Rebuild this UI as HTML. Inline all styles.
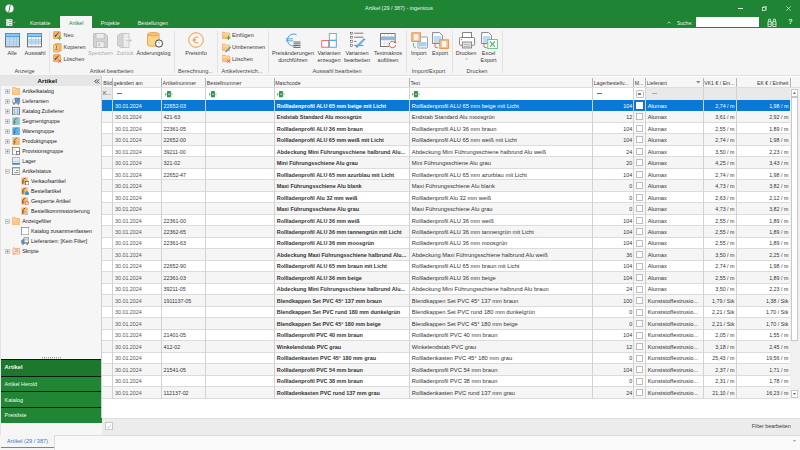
<!DOCTYPE html>
<html><head><meta charset="utf-8">
<style>
*{box-sizing:border-box;margin:0;padding:0}
html,body{width:800px;height:450px;overflow:hidden;background:#f5f5f5;font-family:"Liberation Sans",sans-serif;color:#333}
.a{position:absolute;white-space:nowrap}
#title{position:absolute;left:0;top:0;width:800px;height:27.5px;background:#1f8534}
.wt{color:#e8f3ea;font-size:5.6px}
#ribbon{position:absolute;left:0;top:27.5px;width:800px;height:48.5px;background:#f5f5f5;border-bottom:1px solid #e2e2e2}
.rl{font-size:5.5px;color:#3a3a3a;line-height:6.5px}
.gl{font-size:5.6px;color:#4a4a4a}
.sep{position:absolute;top:3px;width:1px;height:42px;background:#dedede}
#nav{position:absolute;left:0;top:76px;width:101.5px;height:359px;background:#f6f6f6;border-left:1px solid #e4e4e4}
#navh{position:absolute;left:0;top:0;width:100.5px;height:10px;background:#e6e6e6}
.ti{position:absolute;font-size:5.3px;color:#222;white-space:nowrap;line-height:8px}
#grid{position:absolute;left:101.5px;top:76px;width:698.5px;height:359.5px;background:#fff}
.ht{font-size:5.2px;color:#3a3a3a;line-height:10px}
.c{font-size:5.4px;line-height:11.45px;color:#333}
.c.d{color:#555;font-size:5.3px}
.c.n{font-size:5.3px}
.c.mc{font-weight:bold;font-size:5.45px}
.c.tx{font-size:5.77px}
.c.s{color:#fff}
.fk{color:#6a4848;font-size:5.6px}
.cb{width:7px;height:7px;background:#fff;border:0.7px solid #bdbdbd}
.cb.s{border-color:#fff}
.tabt{font-size:5.2px;color:#e6f2e8;line-height:8px}
.tabt.sel{color:#2a8040}
.dis{color:#aaa !important}
.navht{font-size:6.2px;font-weight:bold;color:#111;line-height:9px}
.gbt{font-size:5.4px;color:#f0f7f1;line-height:7px}
.gbt.gsel{font-weight:bold;font-size:5.8px}
.bt{font-size:5.6px;color:#3b78c8;line-height:7px}

</style></head><body>
<div id="title"><svg class="a" style="left:4.6px;top:3.8px" width="9" height="9" viewBox="0 0 9 9"><circle cx="4.5" cy="4.5" r="4.1" fill="#fff"/><path d="M5.3 0.6 L3.7 8.4" stroke="#1f8534" stroke-width="0.9"/></svg><div class="a wt" style="left:365px;top:4.6px;font-size:5.45px">Artikel (29 / 387) - ingenious</div><div class="a" style="left:738px;top:8px;width:5px;height:0.7px;background:#e8f3ea"></div><svg class="a" style="left:761.5px;top:5.5px" width="5" height="5" viewBox="0 0 5 5"><rect x="0.35" y="1.35" width="3.2" height="3.3" fill="none" stroke="#e8f3ea" stroke-width="0.7"/><path d="M1.4 1.2V0.35H4.65V3.6H3.7" fill="none" stroke="#e8f3ea" stroke-width="0.6"/></svg><svg class="a" style="left:786px;top:5.6px" width="5" height="5" viewBox="0 0 5 5"><path d="M0.3 0.3L4.7 4.7M4.7 0.3L0.3 4.7" stroke="#e8f3ea" stroke-width="0.7"/></svg><svg class="a" style="left:5.8px;top:18.8px" width="10" height="8" viewBox="0 0 10 8"><rect x="0.2" y="0.2" width="6.2" height="6.7" fill="#f2f2f2"/><rect x="0.2" y="0.2" width="1.3" height="6.7" fill="#cfcfcf"/><path d="M3 1.5H5.5M2.5 3.55H5.5M3 5.6H5.5" stroke="#777" stroke-width="0.7"/><path d="M8.2 3.3L9.2 3.3" stroke="#ddd" stroke-width="0.8"/></svg><div class="a" style="left:60.2px;top:16px;width:32px;height:11.5px;background:#f5f5f5"></div><div class="a tabt" style="left:30px;top:18.3px;top:18.9px">Kontakte</div><div class="a tabt sel" style="left:61.2px;top:18.9px;width:30px;text-align:center">Artikel</div><div class="a tabt" style="left:100.7px;top:18.3px;top:18.9px">Projekte</div><div class="a tabt" style="left:137.8px;top:18.3px;top:18.9px">Bestellungen</div><svg class="a" style="left:666.5px;top:20.5px" width="4" height="3" viewBox="0 0 4 3"><path d="M0.4 2.5L2 0.8L3.6 2.5" fill="none" stroke="#e8f3ea" stroke-width="0.7"/></svg><div class="a tabt" style="left:677px;top:18.5px;font-size:5px">Suche:</div><div class="a" style="left:696.4px;top:17px;width:62.6px;height:9.6px;background:#fff"></div><svg class="a" style="left:766.5px;top:17.8px" width="10" height="9" viewBox="0 0 10 9"><g fill="none" stroke="#e8f3ea" stroke-width="0.8"><rect x="1" y="3.8" width="3.2" height="4.6"/><rect x="5.8" y="3.8" width="3.2" height="4.6"/><path d="M1.6 3.8V1.2H3.6V3.8M6.4 3.8V1.2H8.4V3.8M4.2 5H5.8"/></g><path d="M1 6.3H4.2M5.8 6.3H9" stroke="#e8f3ea" stroke-width="0.6"/></svg><div class="a tabt" style="left:788.3px;top:17.6px;font-size:7px;font-weight:bold;color:#e8f3ea">?</div></div>
<div id="ribbon"></div><div class="a" style="left:48.5px;top:30.8px;width:0.8px;height:42px;background:#e2e2e2"></div><div class="a" style="left:173.9px;top:30.8px;width:0.8px;height:42px;background:#e2e2e2"></div><div class="a" style="left:216.8px;top:30.8px;width:0.8px;height:42px;background:#e2e2e2"></div><div class="a" style="left:267.5px;top:30.8px;width:0.8px;height:42px;background:#e2e2e2"></div><div class="a" style="left:405.5px;top:30.8px;width:0.8px;height:42px;background:#e2e2e2"></div><div class="a" style="left:452.0px;top:30.8px;width:0.8px;height:42px;background:#e2e2e2"></div><div class="a" style="left:501.5px;top:30.8px;width:0.8px;height:42px;background:#e2e2e2"></div><svg class="a" style="left:5px;top:32.8px" width="15" height="15" viewBox="0 0 15 15"><rect x="0.5" y="0.5" width="14" height="13.3" fill="#fff" stroke="#6d6d6d" stroke-width="0.8"/><rect x="0.5" y="0.5" width="14" height="3.2" fill="#8fc6ef" stroke="#3d94dc" stroke-width="0.8"/><rect x="0.9" y="3.7" width="13.2" height="2.5" fill="#bfe0f7"/><rect x="0.9" y="6.2" width="13.2" height="2.5" fill="#bfe0f7"/><rect x="0.9" y="8.7" width="13.2" height="2.5" fill="#bfe0f7"/><rect x="0.9" y="11.2" width="13.2" height="2.5" fill="#bfe0f7"/><path d="M4.8 3.7V13.4" stroke="#9ab" stroke-width="0.4"/><path d="M8.5 3.7V13.4" stroke="#9ab" stroke-width="0.4"/><path d="M11.4 3.7V13.4" stroke="#9ab" stroke-width="0.4"/><path d="M0.9 6.2H14.1" stroke="#9ab" stroke-width="0.4"/><path d="M0.9 8.7H14.1" stroke="#9ab" stroke-width="0.4"/><path d="M0.9 11.2H14.1" stroke="#9ab" stroke-width="0.4"/><rect x="0.5" y="0.5" width="14" height="13.3" fill="none" stroke="#6d6d6d" stroke-width="0.8"/><rect x="0.5" y="0.5" width="14" height="3.2" fill="#8fc6ef" stroke="#3d94dc" stroke-width="0.8"/></svg><svg class="a" style="left:27.2px;top:32.8px" width="15" height="15" viewBox="0 0 15 15"><rect x="0.5" y="0.5" width="14" height="13.3" fill="#fff" stroke="#6d6d6d" stroke-width="0.8"/><rect x="0.5" y="0.5" width="14" height="3.2" fill="#8fc6ef" stroke="#3d94dc" stroke-width="0.8"/><rect x="0.9" y="3.7" width="13.2" height="2.5" fill="#ffffff"/><rect x="0.9" y="6.2" width="13.2" height="2.5" fill="#bfe0f7"/><rect x="0.9" y="8.7" width="13.2" height="2.5" fill="#bfe0f7"/><rect x="0.9" y="11.2" width="13.2" height="2.5" fill="#ffffff"/><path d="M4.8 3.7V13.4" stroke="#9ab" stroke-width="0.4"/><path d="M8.5 3.7V13.4" stroke="#9ab" stroke-width="0.4"/><path d="M11.4 3.7V13.4" stroke="#9ab" stroke-width="0.4"/><path d="M0.9 6.2H14.1" stroke="#9ab" stroke-width="0.4"/><path d="M0.9 8.7H14.1" stroke="#9ab" stroke-width="0.4"/><path d="M0.9 11.2H14.1" stroke="#9ab" stroke-width="0.4"/><rect x="0.5" y="0.5" width="14" height="13.3" fill="none" stroke="#6d6d6d" stroke-width="0.8"/><rect x="0.5" y="0.5" width="14" height="3.2" fill="#8fc6ef" stroke="#3d94dc" stroke-width="0.8"/></svg><div class="a rl" style="left:-2.8000000000000007px;top:50.4px;width:30px;text-align:center">Alle</div><div class="a rl" style="left:15.0px;top:50.4px;width:40px;text-align:center">Auswahl</div><div class="a gl" style="left:-0.5px;top:68.3px;width:50px;text-align:center">Anzeige</div><svg class="a" style="left:53.2px;top:30.8px" width="9" height="10" viewBox="0 0 9 10"><rect x="0.4" y="0.6" width="7" height="7" rx="0.8" fill="#f6b46a" stroke="#e88a2e" stroke-width="0.6"/><path d="M2 6L5.5 1.5" stroke="#444" stroke-width="1"/><path d="M1.6 4.2H3.3" stroke="#444" stroke-width="0.7"/><path d="M6.6 5V9.2M4.5 7.1H8.7" stroke="#3cb35a" stroke-width="1"/></svg><svg class="a" style="left:53.2px;top:42.6px" width="9" height="10" viewBox="0 0 9 10"><rect x="2.2" y="0.4" width="6" height="7.6" rx="0.6" fill="#f6c27a" stroke="#e88a2e" stroke-width="0.6"/><rect x="0.4" y="1.6" width="6" height="7.4" rx="0.6" fill="#f8c884" stroke="#e88a2e" stroke-width="0.6"/><path d="M2.2 6.5H4.5M3.5 2.5V5.5" stroke="#555" stroke-width="0.7"/></svg><svg class="a" style="left:53.2px;top:54.4px" width="9" height="10" viewBox="0 0 9 10"><rect x="0.4" y="0.6" width="7" height="7" rx="0.8" fill="#f6b46a" stroke="#e88a2e" stroke-width="0.6"/><path d="M2 6L5.5 1.5" stroke="#444" stroke-width="1"/><path d="M1.6 4.2H3.3" stroke="#444" stroke-width="0.7"/><path d="M5.2 5.6L8.4 8.8M8.4 5.6L5.2 8.8" stroke="#e24a4a" stroke-width="0.8"/></svg><div class="a rl" style="left:63.5px;top:32.2px;">Neu</div><div class="a rl" style="left:63.5px;top:44.0px;">Kopieren</div><div class="a rl" style="left:63.5px;top:55.8px;">Löschen</div><svg class="a" style="left:93px;top:32.5px" width="15" height="15" viewBox="0 0 15 15"><path d="M0.6 0.6H12L14.4 3V14.4H0.6Z" fill="#d4d4d4" stroke="#bcbcbc" stroke-width="1"/><rect x="3" y="0.6" width="8.2" height="5.2" fill="#ededed" stroke="#bcbcbc" stroke-width="0.8"/><rect x="3.6" y="8.6" width="7.6" height="5.8" fill="#ededed" stroke="#bcbcbc" stroke-width="0.8"/><rect x="5.2" y="10" width="2" height="3" fill="#c8c8c8"/></svg><svg class="a" style="left:117px;top:32.5px" width="16" height="15" viewBox="0 0 16 15"><path d="M0.6 2.5L4 0.6H9.5V14.4H4L0.6 12.5Z" fill="#d4d4d4" stroke="#bdbdbd" stroke-width="0.8"/><rect x="6" y="0.6" width="6" height="13.8" fill="#ececec" stroke="#c4c4c4" stroke-width="0.8"/><path d="M9 7.5H14.5M13 6L14.7 7.5L13 9" fill="none" stroke="#c4c4c4" stroke-width="0.7"/></svg><svg class="a" style="left:146.5px;top:31.8px" width="17" height="16" viewBox="0 0 17 16"><path d="M0.6 2.2V13.2C0.6 14.5 12 14.5 12 13.2V2.2" fill="#f8d68c" stroke="#ee9a3e" stroke-width="0.9"/><ellipse cx="6.3" cy="2.2" rx="5.7" ry="1.7" fill="#f6c46e" stroke="#ee9a3e" stroke-width="0.9"/><circle cx="12" cy="11.5" r="3.6" fill="#fff" stroke="#333" stroke-width="0.9"/><path d="M11.2 9.8L12.4 11.6" stroke="#3a8fd8" stroke-width="0.8"/></svg><div class="a rl dis" style="left:80.5px;top:50.4px;width:40px;text-align:center">Speichern</div><div class="a rl dis" style="left:105.0px;top:50.4px;width:40px;text-align:center">Zurück</div><div class="a rl" style="left:128.5px;top:50.4px;width:50px;text-align:center">Änderungslog</div><div class="a gl" style="left:76.5px;top:68.3px;width:70px;text-align:center">Artikel bearbeiten</div><svg class="a" style="left:188px;top:31.5px" width="16" height="16" viewBox="0 0 16 16"><circle cx="8" cy="8" r="7.3" fill="#fff" stroke="#f09a50" stroke-width="1"/><circle cx="8" cy="8" r="5.9" fill="none" stroke="#f6bf8e" stroke-width="0.6" stroke-dasharray="1.2 0.6"/><path d="M10.6 5.6A3.1 3.1 0 1 0 10.6 10.4" fill="none" stroke="#ee8a3a" stroke-width="1"/><path d="M4.6 7.3H8.6M4.6 8.8H8.6" stroke="#ee8a3a" stroke-width="0.7"/></svg><div class="a rl" style="left:176.0px;top:50.4px;width:40px;text-align:center">Preisinfo</div><div class="a gl" style="left:173.0px;top:68.3px;width:45px;text-align:center">Berechnung...</div><svg class="a" style="left:222px;top:30.8px" width="9" height="10" viewBox="0 0 9 10"><path d="M0.4 1.2H3L3.8 2.1H7.6V7.6H0.4Z" fill="#f9c87e" stroke="#ee9a3e" stroke-width="0.6"/><path d="M0.4 3H7.6" stroke="#fff" stroke-width="0.5"/><path d="M6.5 4.8V9M4.4 6.9H8.6" stroke="#3cb35a" stroke-width="1"/></svg><svg class="a" style="left:222px;top:42.6px" width="9" height="10" viewBox="0 0 9 10"><path d="M0.4 1.2H3L3.8 2.1H7.6V7.6H0.4Z" fill="#f9c87e" stroke="#ee9a3e" stroke-width="0.6"/><path d="M0.4 3H7.6" stroke="#fff" stroke-width="0.5"/><path d="M3.6 9.2L8.6 3.8" stroke="#3a8fd8" stroke-width="1.2"/></svg><svg class="a" style="left:222px;top:54.4px" width="9" height="10" viewBox="0 0 9 10"><path d="M0.4 1.2H3L3.8 2.1H7.6V7.6H0.4Z" fill="#f9c87e" stroke="#ee9a3e" stroke-width="0.6"/><path d="M0.4 3H7.6" stroke="#fff" stroke-width="0.5"/><path d="M5.2 5.8L8.2 8.8M8.2 5.8L5.2 8.8" stroke="#e24a4a" stroke-width="0.8"/></svg><div class="a rl" style="left:232px;top:32.2px;">Einfügen</div><div class="a rl" style="left:232px;top:44.0px;">Umbenennen</div><div class="a rl" style="left:232px;top:55.8px;">Löschen</div><div class="a gl" style="left:212.0px;top:68.3px;width:60px;text-align:center">Artikelverzeich...</div><svg class="a" style="left:284.5px;top:32.5px" width="17" height="16" viewBox="0 0 17 16"><path d="M11.5 1.8A6 6 0 1 0 11.5 12.2" fill="none" stroke="#3a94dc" stroke-width="0.9"/><path d="M0.8 5.8H8M0.8 7.8H8" stroke="#3a94dc" stroke-width="0.8"/><path d="M8.5 9H15.5M8.5 10.8H15.5M8.5 12.6H15.5M8.5 14.4H15.5" stroke="#444" stroke-width="0.8"/></svg><div class="a rl" style="left:263.0px;top:50.4px;width:60px;text-align:center">Preisänderungen</div><div class="a rl" style="left:263.0px;top:56.6px;width:60px;text-align:center">durchführen</div><svg class="a" style="left:320.5px;top:32.5px" width="16" height="15" viewBox="0 0 16 15"><rect x="8.3" y="0.5" width="7" height="6.6" fill="#fff" stroke="#5cc07a" stroke-width="0.9"/><rect x="0.8" y="7.6" width="7" height="6.6" fill="#fff" stroke="#e85a5a" stroke-width="0.9"/><rect x="8.3" y="7.6" width="7" height="6.6" fill="#fff" stroke="#4a9ae0" stroke-width="0.9"/></svg><div class="a rl" style="left:309.0px;top:50.4px;width:40px;text-align:center">Varianten</div><div class="a rl" style="left:309.0px;top:56.6px;width:40px;text-align:center">erzeugen</div><svg class="a" style="left:349.5px;top:32.3px" width="16" height="16" viewBox="0 0 16 16"><rect x="0.6" y="0.29999999999999993" width="1.8" height="1.8" fill="#fff" stroke="#555" stroke-width="0.55"/><path d="M4.2 1.2H13.3" stroke="#4a4a4a" stroke-width="0.7"/><rect x="0.6" y="4.3" width="1.8" height="1.8" fill="#fff" stroke="#555" stroke-width="0.55"/><path d="M4.2 5.2H13.3" stroke="#4a4a4a" stroke-width="0.7"/><rect x="0.6" y="8.5" width="1.8" height="1.8" fill="#fff" stroke="#555" stroke-width="0.55"/><path d="M4.2 9.4H6.5" stroke="#4a4a4a" stroke-width="0.7"/><rect x="0.6" y="12.5" width="1.8" height="1.8" fill="#fff" stroke="#555" stroke-width="0.55"/><path d="M4.2 13.4H13.3" stroke="#4a4a4a" stroke-width="0.7"/><path d="M6.3 15.2L14.6 6.9" stroke="#3a94dc" stroke-width="2"/><path d="M6.9 14.6L14 7.5" stroke="#d6ebfa" stroke-width="0.7"/></svg><div class="a rl" style="left:337.0px;top:50.4px;width:40px;text-align:center">Varianten</div><div class="a rl" style="left:337.0px;top:56.6px;width:40px;text-align:center">bearbeiten</div><svg class="a" style="left:379.5px;top:32.5px" width="18" height="16" viewBox="0 0 18 16"><rect x="0.6" y="0.6" width="14.5" height="13" fill="#fff" stroke="#555" stroke-width="0.8"/><rect x="0.9" y="3.6" width="14" height="3.4" fill="#7fbcec"/><path d="M0.6 3.4H15M0.6 7.2H15M0.6 10.4H15M4.3 0.6V13.6M8 0.6V13.6M11.6 0.6V3.6" stroke="#bbb" stroke-width="0.4"/><circle cx="12.4" cy="11.8" r="3.6" fill="#fff"/><path d="M14.8 9.4A3.2 3.2 0 1 0 15.6 12" fill="none" stroke="#e84040" stroke-width="0.9"/><path d="M13.4 9.6L15.6 10.3L15.7 7.9Z" fill="#e84040"/></svg><div class="a rl" style="left:368.0px;top:50.4px;width:40px;text-align:center">Textmakros</div><div class="a rl" style="left:368.0px;top:56.6px;width:40px;text-align:center">auflösen</div><div class="a gl" style="left:302.0px;top:68.3px;width:70px;text-align:center">Auswahl bearbeiten</div><svg class="a" style="left:410.5px;top:31.5px" width="17" height="17" viewBox="0 0 17 17"><rect x="7" y="5" width="9.5" height="11" rx="0.6" fill="#fff" stroke="#8a8a8a" stroke-width="0.8"/><rect x="8" y="10" width="7.5" height="4.5" fill="#a9d2f2"/><rect x="0.8" y="0.8" width="8.6" height="8.6" fill="#f9c08e" stroke="#ee8a3a" stroke-width="0.9"/><rect x="2.6" y="2" width="5" height="6.2" rx="0.8" fill="#fff" stroke="#f3a56a" stroke-width="0.4"/><path d="M2.5 11V14.5L5 16" fill="none" stroke="#4ac06a" stroke-width="0.9"/></svg><svg class="a" style="left:431.5px;top:31.5px" width="17" height="17" viewBox="0 0 17 17"><path d="M0.6 0.6H7.6L10.4 3.4V11.5H0.6Z" fill="#fff" stroke="#555" stroke-width="0.7"/><rect x="2" y="4" width="7" height="7" fill="#bcdcf5"/><rect x="7.8" y="7.8" width="8.6" height="8.6" fill="#f9c08e" stroke="#ee8a3a" stroke-width="0.9"/><rect x="9.6" y="9" width="5" height="6.2" rx="1.4" fill="#fff" stroke="#f3a56a" stroke-width="0.4"/><path d="M3 12V15L6 16" fill="none" stroke="#e85a5a" stroke-width="0.9"/></svg><div class="a rl" style="left:398.7px;top:50.4px;width:40px;text-align:center">Import</div><div class="a rl" style="left:420.0px;top:50.4px;width:40px;text-align:center">Export</div><svg class="a" style="left:417.5px;top:58.2px" width="3" height="2" viewBox="0 0 3 2"><path d="M0.3 0.3L1.5 1.5L2.7 0.3" fill="none" stroke="#777" stroke-width="0.5"/></svg><div class="a gl" style="left:403.5px;top:68.3px;width:50px;text-align:center">Import/Export</div><svg class="a" style="left:458.5px;top:31.5px" width="17" height="17" viewBox="0 0 17 17"><rect x="3.6" y="0.6" width="9" height="5.6" fill="#fff" stroke="#666" stroke-width="0.8"/><rect x="0.6" y="5.5" width="15" height="7.8" rx="0.8" fill="#fff" stroke="#666" stroke-width="0.8"/><rect x="3.6" y="10" width="9" height="6" fill="#e4e4e4" stroke="#777" stroke-width="0.8"/><path d="M5 12.5H11M5 14.5H11" stroke="#999" stroke-width="0.6"/><rect x="2" y="7" width="1.2" height="0.8" fill="#3a8fd8"/></svg><svg class="a" style="left:480.5px;top:31.5px" width="17" height="17" viewBox="0 0 17 17"><path d="M0.6 0.6H7.6L10.4 3.4V11.5H0.6Z" fill="#fff" stroke="#555" stroke-width="0.7"/><rect x="2" y="4" width="7" height="7" fill="#bcdcf5"/><rect x="6.8" y="7.6" width="9.6" height="9" fill="#fff" stroke="#5cc07a" stroke-width="0.9"/><path d="M9 9.5L14 14.8M14 9.5L9 14.8" stroke="#4ab86a" stroke-width="1.1"/><path d="M3 12V15L6 16" fill="none" stroke="#e85a5a" stroke-width="0.9"/></svg><div class="a rl" style="left:446.0px;top:50.4px;width:40px;text-align:center">Drucken</div><svg class="a" style="left:464.8px;top:58.2px" width="3" height="2" viewBox="0 0 3 2"><path d="M0.3 0.3L1.5 1.5L2.7 0.3" fill="none" stroke="#777" stroke-width="0.5"/></svg><div class="a rl" style="left:468.5px;top:50.4px;width:40px;text-align:center">Excel</div><div class="a rl" style="left:468.5px;top:56.6px;width:40px;text-align:center">Export</div><div class="a gl" style="left:457.0px;top:68.3px;width:40px;text-align:center">Drucken</div>
<div id="nav"><div id="navh"></div></div><div class="a navht" style="left:27.25px;top:76.3px;width:40px;text-align:center">Artikel</div><svg class="a" style="left:93.6px;top:78.6px" width="6" height="5" viewBox="0 0 6 5"><path d="M2.8 0.4L0.8 2.4L2.8 4.4M5.2 0.4L3.2 2.4L5.2 4.4" fill="none" stroke="#222" stroke-width="0.85"/></svg><svg class="a" style="left:4.8px;top:88.5px" width="5" height="5" viewBox="0 0 5 5"><rect x="0.4" y="0.4" width="4.2" height="4.2" fill="#ececec" stroke="#b4b4b4" stroke-width="0.6"/><path d="M1.4 2.5H3.6" stroke="#4a6aa8" stroke-width="0.55"/><path d="M2.5 1.4V3.6" stroke="#4a6aa8" stroke-width="0.55"/></svg><svg class="a" style="left:12px;top:86.8px" width="8.4" height="8.4" viewBox="0 0 8.4 8.4"><path d="M0.4 0.6H3.2L4 1.6H7.8V7.8H0.4Z" fill="#fbc98a" stroke="#efa45a" stroke-width="0.6"/><path d="M0.5 2.2H3" stroke="#fff" stroke-width="0.5"/></svg><div class="a ti" style="left:22.2px;top:87px;">Artikelkatalog</div><svg class="a" style="left:4.8px;top:98.5px" width="5" height="5" viewBox="0 0 5 5"><rect x="0.4" y="0.4" width="4.2" height="4.2" fill="#ececec" stroke="#b4b4b4" stroke-width="0.6"/><path d="M1.4 2.5H3.6" stroke="#4a6aa8" stroke-width="0.55"/><path d="M2.5 1.4V3.6" stroke="#4a6aa8" stroke-width="0.55"/></svg><svg class="a" style="left:12px;top:96.8px" width="8.4" height="8.4" viewBox="0 0 8.4 8.4"><rect x="3" y="1" width="4.8" height="4.4" fill="#4a9ae0" stroke="#777" stroke-width="0.5"/><path d="M0.5 5.4V3.3L2 2H3V5.4Z" fill="#fff" stroke="#777" stroke-width="0.5"/><path d="M0.5 6.2H7.8" stroke="#666" stroke-width="0.6"/><circle cx="2" cy="7" r="0.8" fill="#555"/><circle cx="6.3" cy="7" r="0.8" fill="#555"/></svg><div class="a ti" style="left:22.2px;top:97px;">Lieferanten</div><svg class="a" style="left:4.8px;top:108.5px" width="5" height="5" viewBox="0 0 5 5"><rect x="0.4" y="0.4" width="4.2" height="4.2" fill="#ececec" stroke="#b4b4b4" stroke-width="0.6"/><path d="M1.4 2.5H3.6" stroke="#4a6aa8" stroke-width="0.55"/><path d="M2.5 1.4V3.6" stroke="#4a6aa8" stroke-width="0.55"/></svg><svg class="a" style="left:12px;top:106.8px" width="8.4" height="8.4" viewBox="0 0 8.4 8.4"><rect x="0.6" y="0.5" width="7" height="7.4" fill="#fff" stroke="#666" stroke-width="0.8"/><rect x="1.5" y="1.6" width="2" height="5.2" fill="#6fb0e8"/><rect x="4.5" y="1.6" width="2" height="5.2" fill="#6fb0e8"/><path d="M1.5 3.5H6.5M1.5 5H6.5" stroke="#fff" stroke-width="0.4"/></svg><div class="a ti" style="left:22.2px;top:107px;">Katalog Zulieferer</div><svg class="a" style="left:4.8px;top:118.5px" width="5" height="5" viewBox="0 0 5 5"><rect x="0.4" y="0.4" width="4.2" height="4.2" fill="#ececec" stroke="#b4b4b4" stroke-width="0.6"/><path d="M1.4 2.5H3.6" stroke="#4a6aa8" stroke-width="0.55"/><path d="M2.5 1.4V3.6" stroke="#4a6aa8" stroke-width="0.55"/></svg><svg class="a" style="left:12px;top:116.8px" width="8.4" height="8.4" viewBox="0 0 8.4 8.4"><rect x="0.3" y="0.3" width="7.6" height="7.6" rx="0.6" fill="#8fc9c9"/><path d="M2.2 7.5V3.2L4.8 0.8" stroke="#555" stroke-width="0.8" fill="none"/><path d="M2.2 5H4" stroke="#555" stroke-width="0.6"/></svg><div class="a ti" style="left:22.2px;top:117px;">Segmentgruppe</div><svg class="a" style="left:4.8px;top:128.5px" width="5" height="5" viewBox="0 0 5 5"><rect x="0.4" y="0.4" width="4.2" height="4.2" fill="#ececec" stroke="#b4b4b4" stroke-width="0.6"/><path d="M1.4 2.5H3.6" stroke="#4a6aa8" stroke-width="0.55"/><path d="M2.5 1.4V3.6" stroke="#4a6aa8" stroke-width="0.55"/></svg><svg class="a" style="left:12px;top:126.8px" width="8.4" height="8.4" viewBox="0 0 8.4 8.4"><rect x="0.3" y="0.3" width="7.6" height="7.6" rx="0.6" fill="#5fb2ea"/><path d="M2.2 7.5V3.2L4.8 0.8" stroke="#555" stroke-width="0.8" fill="none"/><path d="M2.2 5H4" stroke="#555" stroke-width="0.6"/></svg><div class="a ti" style="left:22.2px;top:127px;">Warengruppe</div><svg class="a" style="left:4.8px;top:138.5px" width="5" height="5" viewBox="0 0 5 5"><rect x="0.4" y="0.4" width="4.2" height="4.2" fill="#ececec" stroke="#b4b4b4" stroke-width="0.6"/><path d="M1.4 2.5H3.6" stroke="#4a6aa8" stroke-width="0.55"/><path d="M2.5 1.4V3.6" stroke="#4a6aa8" stroke-width="0.55"/></svg><svg class="a" style="left:12px;top:136.8px" width="8.4" height="8.4" viewBox="0 0 8.4 8.4"><rect x="0.3" y="0.3" width="7.6" height="7.6" rx="0.6" fill="#f6bb70"/><path d="M2.2 7.5V3.2L4.8 0.8" stroke="#555" stroke-width="0.8" fill="none"/><path d="M2.2 5H4" stroke="#555" stroke-width="0.6"/></svg><div class="a ti" style="left:22.2px;top:137px;">Produktgruppe</div><svg class="a" style="left:4.8px;top:148.5px" width="5" height="5" viewBox="0 0 5 5"><rect x="0.4" y="0.4" width="4.2" height="4.2" fill="#ececec" stroke="#b4b4b4" stroke-width="0.6"/><path d="M1.4 2.5H3.6" stroke="#4a6aa8" stroke-width="0.55"/><path d="M2.5 1.4V3.6" stroke="#4a6aa8" stroke-width="0.55"/></svg><svg class="a" style="left:12px;top:146.8px" width="8.4" height="8.4" viewBox="0 0 8.4 8.4"><rect x="0.5" y="0.5" width="7.2" height="7.4" fill="#fff" stroke="#555" stroke-width="0.6"/><path d="M1.5 3H3.5" stroke="#e89a40" stroke-width="0.7"/><rect x="4.5" y="4.5" width="3" height="3" fill="#fff" stroke="#444" stroke-width="0.6"/></svg><div class="a ti" style="left:22.2px;top:147px;">Provisionsgruppe</div><svg class="a" style="left:12px;top:156.8px" width="8.4" height="8.4" viewBox="0 0 8.4 8.4"><rect x="0.4" y="0.8" width="7.6" height="6.8" fill="#fff" stroke="#5a7ea8" stroke-width="0.6"/><path d="M1 3H7.4M1 4.5H7.4" stroke="#8aa" stroke-width="0.5"/><rect x="0.6" y="5.8" width="7.2" height="1.6" fill="#3a8ad8"/></svg><div class="a ti" style="left:22.2px;top:157px;">Lager</div><svg class="a" style="left:4.8px;top:168.5px" width="5" height="5" viewBox="0 0 5 5"><rect x="0.4" y="0.4" width="4.2" height="4.2" fill="#ececec" stroke="#b4b4b4" stroke-width="0.6"/><path d="M1.4 2.5H3.6" stroke="#4a6aa8" stroke-width="0.55"/></svg><svg class="a" style="left:12px;top:166.8px" width="8.4" height="8.4" viewBox="0 0 8.4 8.4"><rect x="0.4" y="0.8" width="7.6" height="7" fill="#fff" stroke="#555" stroke-width="0.7"/><rect x="0.4" y="0.3" width="7.6" height="1" fill="#5cc070"/><path d="M2.2 3.5H3M4 3.5H6.5M2.2 5.6H6.5" stroke="#444" stroke-width="0.6"/></svg><div class="a ti" style="left:22.2px;top:167px;">Artikelstatus</div><svg class="a" style="left:21px;top:176.8px" width="8.4" height="8.4" viewBox="0 0 8.4 8.4"><rect x="0.4" y="0.6" width="6.4" height="7.2" rx="0.5" fill="#f7b86e"/><path d="M1.8 7V3L4.5 0.8" stroke="#444" stroke-width="0.8" fill="none"/><path d="M1.8 4.8H3.4" stroke="#444" stroke-width="0.6"/><rect x="4.3" y="4.6" width="3.6" height="3.4" fill="#fff" stroke="#444" stroke-width="0.6"/></svg><div class="a ti" style="left:31px;top:177px;">Verkaufsartikel</div><svg class="a" style="left:21px;top:186.8px" width="8.4" height="8.4" viewBox="0 0 8.4 8.4"><rect x="0.4" y="0.6" width="6.4" height="7.2" rx="0.5" fill="#f7b86e"/><path d="M1.8 7V3L4.5 0.8" stroke="#444" stroke-width="0.8" fill="none"/><path d="M1.8 4.8H3.4" stroke="#444" stroke-width="0.6"/><circle cx="6" cy="6.2" r="2" fill="#3a94dc"/></svg><div class="a ti" style="left:31px;top:187px;">Bestellartikel</div><svg class="a" style="left:21px;top:196.8px" width="8.4" height="8.4" viewBox="0 0 8.4 8.4"><rect x="0.4" y="0.6" width="6.4" height="7.2" rx="0.5" fill="#f7b86e"/><path d="M1.8 7V3L4.5 0.8" stroke="#444" stroke-width="0.8" fill="none"/><path d="M1.8 4.8H3.4" stroke="#444" stroke-width="0.6"/><circle cx="6" cy="6.2" r="1.8" fill="#fff" stroke="#e84a4a" stroke-width="0.7"/><path d="M4.8 7.4L7.2 5" stroke="#e84a4a" stroke-width="0.6"/></svg><div class="a ti" style="left:31px;top:197px;">Gesperrte Artikel</div><svg class="a" style="left:21px;top:206.8px" width="8.4" height="8.4" viewBox="0 0 8.4 8.4"><rect x="0.4" y="0.6" width="6.4" height="7.2" rx="0.5" fill="#f7b86e"/><path d="M1.8 7V3L4.5 0.8" stroke="#444" stroke-width="0.8" fill="none"/><path d="M1.8 4.8H3.4" stroke="#444" stroke-width="0.6"/><circle cx="5.8" cy="5" r="0.9" fill="#9cc6ee"/><path d="M4.3 8C4.3 6.6 7.3 6.6 7.3 8Z" fill="#9cc6ee"/></svg><div class="a ti" style="left:31px;top:207px;">Bestellkommissionierung</div><svg class="a" style="left:4.8px;top:218.5px" width="5" height="5" viewBox="0 0 5 5"><rect x="0.4" y="0.4" width="4.2" height="4.2" fill="#ececec" stroke="#b4b4b4" stroke-width="0.6"/><path d="M1.4 2.5H3.6" stroke="#4a6aa8" stroke-width="0.55"/></svg><svg class="a" style="left:12px;top:216.8px" width="8.4" height="8.4" viewBox="0 0 8.4 8.4"><path d="M0.4 0.6H3.2L4 1.6H7.8V7.8H0.4Z" fill="#fbc98a" stroke="#efa45a" stroke-width="0.6"/><path d="M0.5 2.2H3" stroke="#fff" stroke-width="0.5"/></svg><div class="a ti" style="left:22.2px;top:217px;">Anzeigefilter</div><svg class="a" style="left:21px;top:226.8px" width="8.4" height="8.4" viewBox="0 0 8.4 8.4"><rect x="0.5" y="0.5" width="7.4" height="7.4" fill="#fff" stroke="#666" stroke-width="0.6"/></svg><div class="a ti" style="left:31px;top:227px;">Katalog zusammenfassen</div><svg class="a" style="left:21px;top:236.8px" width="8.4" height="8.4" viewBox="0 0 8.4 8.4"><rect x="3" y="0.8" width="4.8" height="5" fill="#fff" stroke="#555" stroke-width="0.6"/><rect x="3.6" y="1.6" width="3.6" height="2" fill="#a9d2f2"/><path d="M0.5 5.8V3.5L2 2.4H3V5.8Z" fill="#4a9ae0" stroke="#666" stroke-width="0.5"/><path d="M0.5 6.4H7.8" stroke="#666" stroke-width="0.6"/><circle cx="2" cy="7.2" r="0.7" fill="#555"/><circle cx="6.3" cy="7.2" r="0.7" fill="#555"/></svg><div class="a ti" style="left:31px;top:237px;">Lieferanten: [Kein Filter]</div><svg class="a" style="left:4.8px;top:248.5px" width="5" height="5" viewBox="0 0 5 5"><rect x="0.4" y="0.4" width="4.2" height="4.2" fill="#ececec" stroke="#b4b4b4" stroke-width="0.6"/><path d="M1.4 2.5H3.6" stroke="#4a6aa8" stroke-width="0.55"/><path d="M2.5 1.4V3.6" stroke="#4a6aa8" stroke-width="0.55"/></svg><svg class="a" style="left:12px;top:246.8px" width="8.4" height="8.4" viewBox="0 0 8.4 8.4"><path d="M1 1.5C1 0.5 3 0.5 3 1.5H7.5V7H2.5C1.5 7 1 6.5 1 6Z" fill="#fbe3d0" stroke="#f39a60" stroke-width="0.7"/><path d="M3 3H6.2M3 4.4H6.2" stroke="#777" stroke-width="0.5"/><circle cx="1.8" cy="7" r="1" fill="none" stroke="#f39a60" stroke-width="0.6"/></svg><div class="a ti" style="left:22.2px;top:247px;">Skripte</div><svg class="a" style="left:42px;top:357.3px" width="19" height="2" viewBox="0 0 19 2"><rect x="0" y="0.3" width="1" height="1" fill="#7a7a8a"/><rect x="2" y="0.3" width="1" height="1" fill="#7a7a8a"/><rect x="4" y="0.3" width="1" height="1" fill="#7a7a8a"/><rect x="6" y="0.3" width="1" height="1" fill="#7a7a8a"/><rect x="8" y="0.3" width="1" height="1" fill="#7a7a8a"/><rect x="10" y="0.3" width="1" height="1" fill="#7a7a8a"/><rect x="12" y="0.3" width="1" height="1" fill="#7a7a8a"/><rect x="14" y="0.3" width="1" height="1" fill="#7a7a8a"/><rect x="16" y="0.3" width="1" height="1" fill="#7a7a8a"/><rect x="18" y="0.3" width="1" height="1" fill="#7a7a8a"/></svg><div class="a" style="left:1px;top:359.2px;width:100.5px;height:63.6px;background:#208534"></div><div class="a" style="left:1px;top:360px;width:100.5px;height:16.2px;background:#1c782c"></div><div class="a" style="left:1px;top:359.2px;width:100.5px;height:1px;background:#0e1a10"></div><div class="a" style="left:1px;top:375.9px;width:100.5px;height:1px;background:#0e1a10"></div><div class="a" style="left:1px;top:391.2px;width:100.5px;height:1px;background:#0e1a10"></div><div class="a" style="left:1px;top:406.9px;width:100.5px;height:1px;background:#0e1a10"></div><div class="a gbt gsel" style="left:4.6px;top:364.2px;">Artikel</div><div class="a gbt" style="left:4.6px;top:380.9px;">Artikel Herold</div><div class="a gbt" style="left:4.6px;top:396.5px;">Katalog</div><div class="a gbt" style="left:4.6px;top:412.09999999999997px;">Preisliste</div>
<div id="grid"></div>
<div class="a" style="left:101.5px;top:76.5px;width:698.5px;height:11px;background:#f6f6f6;border-bottom:1px solid #dedede"></div><div class="a" style="left:101.5px;top:87.5px;width:689px;height:12.3px;background:#fff"></div><div class="a" style="left:102px;top:87.5px;width:10.3px;height:12.3px;background:#e9e9e9"></div><div class="a" style="left:645.5px;top:87.5px;width:145px;height:12.3px;background:#e9e9e9"></div><div class="a" style="left:102px;top:99.80px;width:688.4px;height:11.49px;background:#0a78d7;border-bottom:1px solid #0a78d7"></div><div class="a c d s" style="left:115.1px;top:100.60px">30.01.2024</div><div class="a c n s" style="left:163.6px;top:100.60px">22652-03</div><div class="a c mc s" style="left:276.8px;top:100.60px">Rollladenprofil ALU 65 mm beige mit Licht</div><div class="a c tx s" style="left:411.8px;top:100.60px">Rollladenprofil ALU 65 mm beige mit Licht</div><div class="a c n s" style="right:167.79999999999995px;top:100.60px">104</div><div class="a cb s" style="left:636.3px;top:102.00px"></div><div class="a c tx s" style="left:647.7px;top:100.60px">Alumax</div><div class="a c n s" style="right:65.60000000000002px;top:100.60px">2,74 / m</div><div class="a c n s" style="right:11.700000000000045px;top:100.60px">1,98 / m</div><div class="a" style="left:102px;top:111.29px;width:688.4px;height:11.49px;background:#f5f5f5;border-bottom:1px solid #dcdcdc"></div><div class="a c d" style="left:115.1px;top:112.09px">30.01.2024</div><div class="a c n" style="left:163.6px;top:112.09px">421-63</div><div class="a c mc" style="left:276.8px;top:112.09px">Endstab Standard Alu moosgrün</div><div class="a c tx" style="left:411.8px;top:112.09px">Endstab Standard Alu moosgrün</div><div class="a c n" style="right:167.79999999999995px;top:112.09px">12</div><div class="a cb" style="left:636.3px;top:113.49px"></div><div class="a c tx" style="left:647.7px;top:112.09px">Alumax</div><div class="a c n" style="right:65.60000000000002px;top:112.09px">3,61 / m</div><div class="a c n" style="right:11.700000000000045px;top:112.09px">2,92 / m</div><div class="a" style="left:102px;top:122.78px;width:688.4px;height:11.49px;background:#ffffff;border-bottom:1px solid #dcdcdc"></div><div class="a c d" style="left:115.1px;top:123.58px">30.01.2024</div><div class="a c n" style="left:163.6px;top:123.58px">22361-05</div><div class="a c mc" style="left:276.8px;top:123.58px">Rollladenprofil ALU 36 mm braun</div><div class="a c tx" style="left:411.8px;top:123.58px">Rollladenprofil ALU 36 mm braun</div><div class="a c n" style="right:167.79999999999995px;top:123.58px">104</div><div class="a cb" style="left:636.3px;top:124.98px"></div><div class="a c tx" style="left:647.7px;top:123.58px">Alumax</div><div class="a c n" style="right:65.60000000000002px;top:123.58px">2,55 / m</div><div class="a c n" style="right:11.700000000000045px;top:123.58px">1,89 / m</div><div class="a" style="left:102px;top:134.27px;width:688.4px;height:11.49px;background:#f5f5f5;border-bottom:1px solid #dcdcdc"></div><div class="a c d" style="left:115.1px;top:135.07px">30.01.2024</div><div class="a c n" style="left:163.6px;top:135.07px">22652-00</div><div class="a c mc" style="left:276.8px;top:135.07px">Rollladenprofil ALU 65 mm weiß mit Licht</div><div class="a c tx" style="left:411.8px;top:135.07px">Rollladenprofil ALU 65 mm weiß mit Licht</div><div class="a c n" style="right:167.79999999999995px;top:135.07px">104</div><div class="a cb" style="left:636.3px;top:136.47px"></div><div class="a c tx" style="left:647.7px;top:135.07px">Alumax</div><div class="a c n" style="right:65.60000000000002px;top:135.07px">2,74 / m</div><div class="a c n" style="right:11.700000000000045px;top:135.07px">1,98 / m</div><div class="a" style="left:102px;top:145.76px;width:688.4px;height:11.49px;background:#ffffff;border-bottom:1px solid #dcdcdc"></div><div class="a c d" style="left:115.1px;top:146.56px">30.01.2024</div><div class="a c n" style="left:163.6px;top:146.56px">39211-00</div><div class="a c mc" style="left:276.8px;top:146.56px">Abdeckung Mini Führungsschiene halbrund Alu...</div><div class="a c tx" style="left:411.8px;top:146.56px">Abdeckung Mini Führungsschiene halbrund Alu weiß</div><div class="a c n" style="right:167.79999999999995px;top:146.56px">24</div><div class="a cb" style="left:636.3px;top:147.96px"></div><div class="a c tx" style="left:647.7px;top:146.56px">Alumax</div><div class="a c n" style="right:65.60000000000002px;top:146.56px">3,50 / m</div><div class="a c n" style="right:11.700000000000045px;top:146.56px">2,23 / m</div><div class="a" style="left:102px;top:157.25px;width:688.4px;height:11.49px;background:#f5f5f5;border-bottom:1px solid #dcdcdc"></div><div class="a c d" style="left:115.1px;top:158.05px">30.01.2024</div><div class="a c n" style="left:163.6px;top:158.05px">321-02</div><div class="a c mc" style="left:276.8px;top:158.05px">Mini Führungsschiene Alu grau</div><div class="a c tx" style="left:411.8px;top:158.05px">Mini Führungsschiene Alu grau</div><div class="a c n" style="right:167.79999999999995px;top:158.05px">20</div><div class="a cb" style="left:636.3px;top:159.45px"></div><div class="a c tx" style="left:647.7px;top:158.05px">Alumax</div><div class="a c n" style="right:65.60000000000002px;top:158.05px">4,25 / m</div><div class="a c n" style="right:11.700000000000045px;top:158.05px">3,43 / m</div><div class="a" style="left:102px;top:168.74px;width:688.4px;height:11.49px;background:#ffffff;border-bottom:1px solid #dcdcdc"></div><div class="a c d" style="left:115.1px;top:169.54px">30.01.2024</div><div class="a c n" style="left:163.6px;top:169.54px">22652-47</div><div class="a c mc" style="left:276.8px;top:169.54px">Rollladenprofil ALU 65 mm azurblau mit Licht</div><div class="a c tx" style="left:411.8px;top:169.54px">Rollladenprofil ALU 65 mm azurblau mit Licht</div><div class="a c n" style="right:167.79999999999995px;top:169.54px">104</div><div class="a cb" style="left:636.3px;top:170.94px"></div><div class="a c tx" style="left:647.7px;top:169.54px">Alumax</div><div class="a c n" style="right:65.60000000000002px;top:169.54px">2,74 / m</div><div class="a c n" style="right:11.700000000000045px;top:169.54px">1,98 / m</div><div class="a" style="left:102px;top:180.23px;width:688.4px;height:11.49px;background:#f5f5f5;border-bottom:1px solid #dcdcdc"></div><div class="a c d" style="left:115.1px;top:181.03px">30.01.2024</div><div class="a c mc" style="left:276.8px;top:181.03px">Maxi Führungsschiene Alu blank</div><div class="a c tx" style="left:411.8px;top:181.03px">Maxi Führungsschiene Alu blank</div><div class="a c n" style="right:167.79999999999995px;top:181.03px">0</div><div class="a cb" style="left:636.3px;top:182.43px"></div><div class="a c tx" style="left:647.7px;top:181.03px">Alumax</div><div class="a c n" style="right:65.60000000000002px;top:181.03px">4,73 / m</div><div class="a c n" style="right:11.700000000000045px;top:181.03px">3,82 / m</div><div class="a" style="left:102px;top:191.72px;width:688.4px;height:11.49px;background:#ffffff;border-bottom:1px solid #dcdcdc"></div><div class="a c d" style="left:115.1px;top:192.52px">30.01.2024</div><div class="a c mc" style="left:276.8px;top:192.52px">Rollladenprofil Alu 32 mm weiß</div><div class="a c tx" style="left:411.8px;top:192.52px">Rollladenprofil Alu 32 mm weiß</div><div class="a c n" style="right:167.79999999999995px;top:192.52px">0</div><div class="a cb" style="left:636.3px;top:193.92px"></div><div class="a c tx" style="left:647.7px;top:192.52px">Alumax</div><div class="a c n" style="right:65.60000000000002px;top:192.52px">2,63 / m</div><div class="a c n" style="right:11.700000000000045px;top:192.52px">2,12 / m</div><div class="a" style="left:102px;top:203.21px;width:688.4px;height:11.49px;background:#f5f5f5;border-bottom:1px solid #dcdcdc"></div><div class="a c d" style="left:115.1px;top:204.01px">30.01.2024</div><div class="a c mc" style="left:276.8px;top:204.01px">Maxi Führungsschiene Alu grau</div><div class="a c tx" style="left:411.8px;top:204.01px">Maxi Führungsschiene Alu grau</div><div class="a c n" style="right:167.79999999999995px;top:204.01px">0</div><div class="a cb" style="left:636.3px;top:205.41px"></div><div class="a c tx" style="left:647.7px;top:204.01px">Alumax</div><div class="a c n" style="right:65.60000000000002px;top:204.01px">4,73 / m</div><div class="a c n" style="right:11.700000000000045px;top:204.01px">3,82 / m</div><div class="a" style="left:102px;top:214.70px;width:688.4px;height:11.49px;background:#ffffff;border-bottom:1px solid #dcdcdc"></div><div class="a c d" style="left:115.1px;top:215.50px">30.01.2024</div><div class="a c n" style="left:163.6px;top:215.50px">22361-00</div><div class="a c mc" style="left:276.8px;top:215.50px">Rollladenprofil ALU 36 mm weiß</div><div class="a c tx" style="left:411.8px;top:215.50px">Rollladenprofil ALU 36 mm weiß</div><div class="a c n" style="right:167.79999999999995px;top:215.50px">104</div><div class="a cb" style="left:636.3px;top:216.90px"></div><div class="a c tx" style="left:647.7px;top:215.50px">Alumax</div><div class="a c n" style="right:65.60000000000002px;top:215.50px">2,55 / m</div><div class="a c n" style="right:11.700000000000045px;top:215.50px">1,89 / m</div><div class="a" style="left:102px;top:226.19px;width:688.4px;height:11.49px;background:#f5f5f5;border-bottom:1px solid #dcdcdc"></div><div class="a c d" style="left:115.1px;top:226.99px">30.01.2024</div><div class="a c n" style="left:163.6px;top:226.99px">22362-65</div><div class="a c mc" style="left:276.8px;top:226.99px">Rollladenprofil ALU 36 mm tannengrün mit Licht</div><div class="a c tx" style="left:411.8px;top:226.99px">Rollladenprofil ALU 36 mm tannengrün mit Licht</div><div class="a c n" style="right:167.79999999999995px;top:226.99px">104</div><div class="a cb" style="left:636.3px;top:228.39px"></div><div class="a c tx" style="left:647.7px;top:226.99px">Alumax</div><div class="a c n" style="right:65.60000000000002px;top:226.99px">2,55 / m</div><div class="a c n" style="right:11.700000000000045px;top:226.99px">1,89 / m</div><div class="a" style="left:102px;top:237.68px;width:688.4px;height:11.49px;background:#ffffff;border-bottom:1px solid #dcdcdc"></div><div class="a c d" style="left:115.1px;top:238.48px">30.01.2024</div><div class="a c n" style="left:163.6px;top:238.48px">22361-63</div><div class="a c mc" style="left:276.8px;top:238.48px">Rollladenprofil ALU 36 mm moosgrün</div><div class="a c tx" style="left:411.8px;top:238.48px">Rollladenprofil ALU 36 mm moosgrün</div><div class="a c n" style="right:167.79999999999995px;top:238.48px">104</div><div class="a cb" style="left:636.3px;top:239.88px"></div><div class="a c tx" style="left:647.7px;top:238.48px">Alumax</div><div class="a c n" style="right:65.60000000000002px;top:238.48px">2,55 / m</div><div class="a c n" style="right:11.700000000000045px;top:238.48px">1,89 / m</div><div class="a" style="left:102px;top:249.17px;width:688.4px;height:11.49px;background:#f5f5f5;border-bottom:1px solid #dcdcdc"></div><div class="a c d" style="left:115.1px;top:249.97px">30.01.2024</div><div class="a c mc" style="left:276.8px;top:249.97px">Abdeckung Maxi Führungsschiene halbrund Alu...</div><div class="a c tx" style="left:411.8px;top:249.97px">Abdeckung Maxi Führungsschiene halbrund Alu weiß</div><div class="a c n" style="right:167.79999999999995px;top:249.97px">36</div><div class="a cb" style="left:636.3px;top:251.37px"></div><div class="a c tx" style="left:647.7px;top:249.97px">Alumax</div><div class="a c n" style="right:65.60000000000002px;top:249.97px">3,50 / m</div><div class="a c n" style="right:11.700000000000045px;top:249.97px">2,25 / m</div><div class="a" style="left:102px;top:260.66px;width:688.4px;height:11.49px;background:#ffffff;border-bottom:1px solid #dcdcdc"></div><div class="a c d" style="left:115.1px;top:261.46px">30.01.2024</div><div class="a c n" style="left:163.6px;top:261.46px">22652-90</div><div class="a c mc" style="left:276.8px;top:261.46px">Rollladenprofil ALU 65 mm braun mit Licht</div><div class="a c tx" style="left:411.8px;top:261.46px">Rollladenprofil ALU 65 mm braun mit Licht</div><div class="a c n" style="right:167.79999999999995px;top:261.46px">104</div><div class="a cb" style="left:636.3px;top:262.86px"></div><div class="a c tx" style="left:647.7px;top:261.46px">Alumax</div><div class="a c n" style="right:65.60000000000002px;top:261.46px">2,74 / m</div><div class="a c n" style="right:11.700000000000045px;top:261.46px">1,98 / m</div><div class="a" style="left:102px;top:272.15px;width:688.4px;height:11.49px;background:#f5f5f5;border-bottom:1px solid #dcdcdc"></div><div class="a c d" style="left:115.1px;top:272.95px">30.01.2024</div><div class="a c n" style="left:163.6px;top:272.95px">22361-03</div><div class="a c mc" style="left:276.8px;top:272.95px">Rollladenprofil ALU 36 mm beige</div><div class="a c tx" style="left:411.8px;top:272.95px">Rollladenprofil ALU 36 mm beige</div><div class="a c n" style="right:167.79999999999995px;top:272.95px">104</div><div class="a cb" style="left:636.3px;top:274.35px"></div><div class="a c tx" style="left:647.7px;top:272.95px">Alumax</div><div class="a c n" style="right:65.60000000000002px;top:272.95px">2,55 / m</div><div class="a c n" style="right:11.700000000000045px;top:272.95px">1,89 / m</div><div class="a" style="left:102px;top:283.64px;width:688.4px;height:11.49px;background:#ffffff;border-bottom:1px solid #dcdcdc"></div><div class="a c d" style="left:115.1px;top:284.44px">30.01.2024</div><div class="a c n" style="left:163.6px;top:284.44px">39211-05</div><div class="a c mc" style="left:276.8px;top:284.44px">Abdeckung Mini Führungsschiene halbrund Alu...</div><div class="a c tx" style="left:411.8px;top:284.44px">Abdeckung Mini Führungsschiene halbrund Alu braun</div><div class="a c n" style="right:167.79999999999995px;top:284.44px">24</div><div class="a cb" style="left:636.3px;top:285.84px"></div><div class="a c tx" style="left:647.7px;top:284.44px">Alumax</div><div class="a c n" style="right:65.60000000000002px;top:284.44px">3,50 / m</div><div class="a c n" style="right:11.700000000000045px;top:284.44px">2,23 / m</div><div class="a" style="left:102px;top:295.13px;width:688.4px;height:11.49px;background:#f5f5f5;border-bottom:1px solid #dcdcdc"></div><div class="a c d" style="left:115.1px;top:295.93px">30.01.2024</div><div class="a c n" style="left:163.6px;top:295.93px">1911137-05</div><div class="a c mc" style="left:276.8px;top:295.93px">Blendkappen Set PVC 45° 137 mm braun</div><div class="a c tx" style="left:411.8px;top:295.93px">Blendkappen Set PVC 45° 137 mm braun</div><div class="a c n" style="right:167.79999999999995px;top:295.93px">100</div><div class="a cb" style="left:636.3px;top:297.33px"></div><div class="a c tx" style="left:647.7px;top:295.93px">Kunststoffextrusio...</div><div class="a c n" style="right:65.60000000000002px;top:295.93px">1,79 / Stk</div><div class="a c n" style="right:11.700000000000045px;top:295.93px">1,38 / Stk</div><div class="a" style="left:102px;top:306.62px;width:688.4px;height:11.49px;background:#ffffff;border-bottom:1px solid #dcdcdc"></div><div class="a c d" style="left:115.1px;top:307.42px">30.01.2024</div><div class="a c mc" style="left:276.8px;top:307.42px">Blendkappen Set PVC rund 180 mm dunkelgrün</div><div class="a c tx" style="left:411.8px;top:307.42px">Blendkappen Set PVC rund 180 mm dunkelgrün</div><div class="a c n" style="right:167.79999999999995px;top:307.42px">0</div><div class="a cb" style="left:636.3px;top:308.82px"></div><div class="a c tx" style="left:647.7px;top:307.42px">Kunststoffextrusio...</div><div class="a c n" style="right:65.60000000000002px;top:307.42px">2,21 / Stk</div><div class="a c n" style="right:11.700000000000045px;top:307.42px">1,70 / Stk</div><div class="a" style="left:102px;top:318.11px;width:688.4px;height:11.49px;background:#f5f5f5;border-bottom:1px solid #dcdcdc"></div><div class="a c d" style="left:115.1px;top:318.91px">30.01.2024</div><div class="a c mc" style="left:276.8px;top:318.91px">Blendkappen Set PVC 45° 180 mm beige</div><div class="a c tx" style="left:411.8px;top:318.91px">Blendkappen Set PVC 45° 180 mm beige</div><div class="a c n" style="right:167.79999999999995px;top:318.91px">0</div><div class="a cb" style="left:636.3px;top:320.31px"></div><div class="a c tx" style="left:647.7px;top:318.91px">Kunststoffextrusio...</div><div class="a c n" style="right:65.60000000000002px;top:318.91px">2,21 / Stk</div><div class="a c n" style="right:11.700000000000045px;top:318.91px">1,70 / Stk</div><div class="a" style="left:102px;top:329.60px;width:688.4px;height:11.49px;background:#ffffff;border-bottom:1px solid #dcdcdc"></div><div class="a c d" style="left:115.1px;top:330.40px">30.01.2024</div><div class="a c n" style="left:163.6px;top:330.40px">21401-05</div><div class="a c mc" style="left:276.8px;top:330.40px">Rollladenprofil PVC 40 mm braun</div><div class="a c tx" style="left:411.8px;top:330.40px">Rollladenprofil PVC 40 mm braun</div><div class="a c n" style="right:167.79999999999995px;top:330.40px">104</div><div class="a cb" style="left:636.3px;top:331.80px"></div><div class="a c tx" style="left:647.7px;top:330.40px">Kunststoffextrusio...</div><div class="a c n" style="right:65.60000000000002px;top:330.40px">2,05 / m</div><div class="a c n" style="right:11.700000000000045px;top:330.40px">1,55 / m</div><div class="a" style="left:102px;top:341.09px;width:688.4px;height:11.49px;background:#f5f5f5;border-bottom:1px solid #dcdcdc"></div><div class="a c d" style="left:115.1px;top:341.89px">30.01.2024</div><div class="a c n" style="left:163.6px;top:341.89px">412-02</div><div class="a c mc" style="left:276.8px;top:341.89px">Winkelendstab PVC grau</div><div class="a c tx" style="left:411.8px;top:341.89px">Winkelendstab PVC grau</div><div class="a c n" style="right:167.79999999999995px;top:341.89px">12</div><div class="a cb" style="left:636.3px;top:343.29px"></div><div class="a c tx" style="left:647.7px;top:341.89px">Kunststoffextrusio...</div><div class="a c n" style="right:65.60000000000002px;top:341.89px">3,18 / m</div><div class="a c n" style="right:11.700000000000045px;top:341.89px">2,45 / m</div><div class="a" style="left:102px;top:352.58px;width:688.4px;height:11.49px;background:#ffffff;border-bottom:1px solid #dcdcdc"></div><div class="a c d" style="left:115.1px;top:353.38px">30.01.2024</div><div class="a c mc" style="left:276.8px;top:353.38px">Rollladenkasten PVC 45° 180 mm grau</div><div class="a c tx" style="left:411.8px;top:353.38px">Rollladenkasten PVC 45° 180 mm grau</div><div class="a c n" style="right:167.79999999999995px;top:353.38px">0</div><div class="a cb" style="left:636.3px;top:354.78px"></div><div class="a c tx" style="left:647.7px;top:353.38px">Kunststoffextrusio...</div><div class="a c n" style="right:65.60000000000002px;top:353.38px">25,43 / m</div><div class="a c n" style="right:11.700000000000045px;top:353.38px">19,56 / m</div><div class="a" style="left:102px;top:364.07px;width:688.4px;height:11.49px;background:#f5f5f5;border-bottom:1px solid #dcdcdc"></div><div class="a c d" style="left:115.1px;top:364.87px">30.01.2024</div><div class="a c n" style="left:163.6px;top:364.87px">21541-05</div><div class="a c mc" style="left:276.8px;top:364.87px">Rollladenprofil PVC 54 mm braun</div><div class="a c tx" style="left:411.8px;top:364.87px">Rollladenprofil PVC 54 mm braun</div><div class="a c n" style="right:167.79999999999995px;top:364.87px">104</div><div class="a cb" style="left:636.3px;top:366.27px"></div><div class="a c tx" style="left:647.7px;top:364.87px">Kunststoffextrusio...</div><div class="a c n" style="right:65.60000000000002px;top:364.87px">2,37 / m</div><div class="a c n" style="right:11.700000000000045px;top:364.87px">1,71 / m</div><div class="a" style="left:102px;top:375.56px;width:688.4px;height:11.49px;background:#ffffff;border-bottom:1px solid #dcdcdc"></div><div class="a c d" style="left:115.1px;top:376.36px">30.01.2024</div><div class="a c mc" style="left:276.8px;top:376.36px">Rollladenprofil PVC 38 mm braun</div><div class="a c tx" style="left:411.8px;top:376.36px">Rollladenprofil PVC 38 mm braun</div><div class="a c n" style="right:167.79999999999995px;top:376.36px">0</div><div class="a cb" style="left:636.3px;top:377.76px"></div><div class="a c tx" style="left:647.7px;top:376.36px">Kunststoffextrusio...</div><div class="a c n" style="right:65.60000000000002px;top:376.36px">2,31 / m</div><div class="a c n" style="right:11.700000000000045px;top:376.36px">1,78 / m</div><div class="a" style="left:102px;top:387.05px;width:688.4px;height:11.49px;background:#f5f5f5;border-bottom:1px solid #dcdcdc"></div><div class="a c d" style="left:115.1px;top:387.85px">30.01.2024</div><div class="a c n" style="left:163.6px;top:387.85px">112137-02</div><div class="a c mc" style="left:276.8px;top:387.85px">Rollladenkasten PVC rund 137 mm grau</div><div class="a c tx" style="left:411.8px;top:387.85px">Rollladenkasten PVC rund 137 mm grau</div><div class="a c n" style="right:167.79999999999995px;top:387.85px">24</div><div class="a cb" style="left:636.3px;top:389.25px"></div><div class="a c tx" style="left:647.7px;top:387.85px">Kunststoffextrusio...</div><div class="a c n" style="right:65.60000000000002px;top:387.85px">21,10 / m</div><div class="a c n" style="right:11.700000000000045px;top:387.85px">16,23 / m</div><div class="a" style="left:111.8px;top:88px;width:1px;height:310.5px;background:#d2d2d2"></div><div class="a" style="left:111.8px;top:77.5px;width:1px;height:9.5px;background:#b4b4b4"></div><div class="a" style="left:160.9px;top:88px;width:1px;height:310.5px;background:#d2d2d2"></div><div class="a" style="left:160.9px;top:77.5px;width:1px;height:9.5px;background:#b4b4b4"></div><div class="a" style="left:205.1px;top:88px;width:1px;height:310.5px;background:#d2d2d2"></div><div class="a" style="left:205.1px;top:77.5px;width:1px;height:9.5px;background:#b4b4b4"></div><div class="a" style="left:273.5px;top:88px;width:1px;height:310.5px;background:#d2d2d2"></div><div class="a" style="left:273.5px;top:77.5px;width:1px;height:9.5px;background:#b4b4b4"></div><div class="a" style="left:408.7px;top:88px;width:1px;height:310.5px;background:#d2d2d2"></div><div class="a" style="left:408.7px;top:77.5px;width:1px;height:9.5px;background:#b4b4b4"></div><div class="a" style="left:592.0px;top:88px;width:1px;height:310.5px;background:#d2d2d2"></div><div class="a" style="left:592.0px;top:77.5px;width:1px;height:9.5px;background:#b4b4b4"></div><div class="a" style="left:633.0px;top:88px;width:1px;height:310.5px;background:#d2d2d2"></div><div class="a" style="left:633.0px;top:77.5px;width:1px;height:9.5px;background:#b4b4b4"></div><div class="a" style="left:645.0px;top:88px;width:1px;height:310.5px;background:#d2d2d2"></div><div class="a" style="left:645.0px;top:77.5px;width:1px;height:9.5px;background:#b4b4b4"></div><div class="a" style="left:702.5px;top:88px;width:1px;height:310.5px;background:#d2d2d2"></div><div class="a" style="left:702.5px;top:77.5px;width:1px;height:9.5px;background:#b4b4b4"></div><div class="a" style="left:735.5px;top:88px;width:1px;height:310.5px;background:#d2d2d2"></div><div class="a" style="left:735.5px;top:77.5px;width:1px;height:9.5px;background:#b4b4b4"></div><div class="a" style="left:789.9px;top:88px;width:1px;height:310.5px;background:#d2d2d2"></div><div class="a" style="left:789.9px;top:77.5px;width:1px;height:9.5px;background:#b4b4b4"></div><div class="a" style="left:101px;top:76px;width:1px;height:341.5px;background:#d0d0d0"></div><div class="a ht" style="left:103.2px;top:77.6px">Bild</div><div class="a ht" style="left:113.5px;top:77.6px">geändert am</div><div class="a ht" style="left:162.6px;top:77.6px">Artikelnummer</div><div class="a ht" style="left:206.8px;top:77.6px">Bestellnummer</div><div class="a ht" style="left:275.2px;top:77.6px">Matchcode</div><div class="a ht" style="left:410.4px;top:77.6px">Text</div><div class="a ht" style="left:593.7px;top:77.6px">Lagerbestellv...</div><div class="a ht" style="left:634.7px;top:77.6px">M...</div><div class="a ht" style="left:646.7px;top:77.6px">Lieferant</div><div class="a ht" style="left:704.2px;top:77.6px">VK1 € / Ein...</div><div class="a ht" style="right:11.6px;top:77.6px">EK € / Einheit</div><svg class="a" style="left:696px;top:81.2px" width="4.4" height="2.6"><path d="M0 0H4.4L2.2 2.6Z" fill="#8a8a8a"/></svg><div class="a c fk" style="left:103px;top:87.8px">K...</div><div class="a" style="left:117px;top:93px;width:5px;height:0.8px;background:#6a6a6a"></div><div class="a" style="left:597px;top:93px;width:5px;height:0.8px;background:#6a6a6a"></div><div class="a" style="left:652px;top:93px;width:5px;height:0.8px;background:#aaa"></div><svg class="a" style="left:164.6px;top:90.8px" width="8" height="7" viewBox="0 0 8 7"><rect x="2" y="0" width="3.9" height="6.3" rx="0.6" fill="#2a9a45"/><circle cx="3.95" cy="3.3" r="0.8" fill="#dff0e3"/><rect x="0" y="2.3" width="1.3" height="2" fill="#888"/><rect x="6.5" y="2.3" width="0.9" height="2" fill="#999"/></svg><svg class="a" style="left:208.8px;top:90.8px" width="8" height="7" viewBox="0 0 8 7"><rect x="2" y="0" width="3.9" height="6.3" rx="0.6" fill="#2a9a45"/><circle cx="3.95" cy="3.3" r="0.8" fill="#dff0e3"/><rect x="0" y="2.3" width="1.3" height="2" fill="#888"/><rect x="6.5" y="2.3" width="0.9" height="2" fill="#999"/></svg><svg class="a" style="left:276.9px;top:90.8px" width="8" height="7" viewBox="0 0 8 7"><rect x="2" y="0" width="3.9" height="6.3" rx="0.6" fill="#2a9a45"/><circle cx="3.95" cy="3.3" r="0.8" fill="#dff0e3"/><rect x="0" y="2.3" width="1.3" height="2" fill="#888"/><rect x="6.5" y="2.3" width="0.9" height="2" fill="#999"/></svg><svg class="a" style="left:412.0px;top:90.8px" width="8" height="7" viewBox="0 0 8 7"><rect x="2" y="0" width="3.9" height="6.3" rx="0.6" fill="#2a9a45"/><circle cx="3.95" cy="3.3" r="0.8" fill="#dff0e3"/><rect x="0" y="2.3" width="1.3" height="2" fill="#888"/><rect x="6.5" y="2.3" width="0.9" height="2" fill="#999"/></svg><div class="a" style="left:636px;top:90px;width:7.5px;height:7.5px;border:0.7px solid #bbb;border-radius:1.2px;background:#fff"></div><div class="a" style="left:638.4px;top:92.5px;width:2.7px;height:2.5px;background:#777;border-radius:0.5px"></div><div class="a" style="left:790.4px;top:87.5px;width:9.6px;height:311.0px;background:#f0f0f0"></div><div class="a" style="left:790.6px;top:88.6px;width:7.4px;height:8.4px;background:#fff;border:0.7px solid #c8c8c8"></div><svg class="a" style="left:792.8px;top:91.6px" width="3" height="2"><path d="M0 2L1.5 0L3 2Z" fill="#666"/></svg><div class="a" style="left:790.6px;top:97px;width:7.4px;height:243.5px;background:#fff;border:0.7px solid #c8c8c8"></div><div class="a" style="left:790.6px;top:390.0px;width:7.4px;height:8.4px;background:#fff;border:0.7px solid #c8c8c8"></div><svg class="a" style="left:792.8px;top:393.2px" width="3" height="2"><path d="M0 0L1.5 2L3 0Z" fill="#666"/></svg><div class="a" style="left:101.5px;top:417.5px;width:698.5px;height:18px;background:#ececec;border-top:0.6px solid #dedede"></div><div class="a" style="left:105px;top:422px;width:7.5px;height:7.5px;background:#fff;border:0.7px solid #c6c6c6"></div><svg class="a" style="left:106px;top:423.5px" width="6" height="5"><path d="M0.8 2.6L2.3 4L5.2 0.8" stroke="#9a9a9a" stroke-width="0.6" fill="none"/></svg><div class="a ht" style="right:9.3px;top:421.2px;font-size:5.4px">Filter bearbeiten</div>
<div class="a" style="left:53.5px;top:435px;width:746.5px;height:15px;background:#f9f9f9;border-top:0.8px solid #dcdcdc;border-left:0.8px solid #dcdcdc"></div><div class="a bt" style="left:7px;top:438px;">Artikel (29 / 387)</div><div class="a" style="left:1px;top:446.8px;width:52.8px;height:1.6px;background:#4a8fd4"></div><svg class="a" style="left:792.5px;top:440px" width="3" height="2" viewBox="0 0 3 2"><path d="M0 0H3L1.5 1.8Z" fill="#999"/></svg>
</body></html>
